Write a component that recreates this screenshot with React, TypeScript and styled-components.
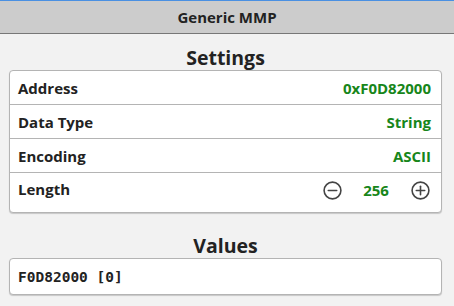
import React from "react";
import styled, { createGlobalStyle } from "styled-components";

const Global = createGlobalStyle`
  html, body { margin: 0; padding: 0; background: #f2f2f2; }
  body { font-family: "Open Sans", "Noto Sans", sans-serif; color: #222; }
  * { box-sizing: border-box; }
`;

const Page = styled.div`
  width: 454px;
  height: 306px;
  display: flex;
  flex-direction: column;
  background: #f2f2f2;
  border-top: 1px solid #4a90e2;
  overflow: hidden;
`;

const Header = styled.div`
  height: 33px;
  flex: none;
  display: flex;
  align-items: center;
  justify-content: center;
  background: #cccccc;
  border-bottom: 1px solid #777;
  font-weight: 700;
  font-size: 15px;
  color: #222;
`;

const Content = styled.div`
  flex: none;
  display: flex;
  flex-direction: column;
  padding: 0 12px 0 9px;
`;

const SectionTitle = styled.div<{ $top: number }>`
  margin-top: ${(p) => p.$top}px;
  height: 25px;
  display: flex;
  align-items: center;
  justify-content: center;
  font-weight: 700;
  font-size: 19.5px;
  color: #222;
`;

const Card = styled.div`
  background: #fff;
  border: 1px solid #b4b4b4;
  border-radius: 4px;
  box-shadow: 0 1px 1px rgba(0, 0, 0, 0.18);
  display: flex;
  flex-direction: column;
`;

const Row = styled.div<{ $h: number }>`
  height: ${(p) => p.$h}px;
  display: flex;
  align-items: center;
  justify-content: space-between;
  padding: 0 10px 0 8px;
  & + & { border-top: 1px solid #b4b4b4; }
`;

const RowTop = styled(Row)`
  align-items: flex-start;
  padding-top: 6px;
`;

const Label = styled.span`
  font-weight: 700;
  font-size: 15px;
  color: #222;
`;

const Value = styled.span`
  font-weight: 700;
  font-size: 15px;
  color: #17861a;
`;

const Stepper = styled.div`
  display: flex;
  align-items: center;
`;

const IconButton = styled.button`
  width: 22px;
  height: 22px;
  border: none;
  background: none;
  padding: 0;
  display: flex;
  align-items: center;
  justify-content: center;
  color: #444;
  cursor: pointer;
`;

const Count = styled(Value)`
  width: 66px;
  text-align: center;
`;

const ValueBox = styled.div`
  height: 37px;
  flex: none;
  background: #fff;
  border: 1px solid #b4b4b4;
  border-radius: 4px;
  box-shadow: 0 1px 1px rgba(0, 0, 0, 0.18);
  display: flex;
  align-items: center;
  padding: 0 8px;
  font-family: "DejaVu Sans Mono", monospace;
  font-weight: 700;
  font-size: 14.5px;
  color: #222;
`;

const CircleIcon = ({ plus }: { plus?: boolean }) => (
  <svg width="19" height="19" viewBox="0 0 19 19" fill="none" stroke="currentColor" strokeWidth="1.6" strokeLinecap="round">
    <circle cx="9.5" cy="9.5" r="8.4" />
    <line x1="5.3" y1="9.5" x2="13.7" y2="9.5" />
    {plus && <line x1="9.5" y1="5.3" x2="9.5" y2="13.7" />}
  </svg>
);

export default function App() {
  return (
    <>
      <Global />
      <Page>
        <Header>Generic MMP</Header>
        <Content>
          <SectionTitle $top={11}>Settings</SectionTitle>
          <Card>
            <Row $h={33}>
              <Label>Address</Label>
              <Value>0xF0D82000</Value>
            </Row>
            <Row $h={34}>
              <Label>Data Type</Label>
              <Value>String</Value>
            </Row>
            <Row $h={34}>
              <Label>Encoding</Label>
              <Value>ASCII</Value>
            </Row>
            <RowTop $h={40}>
              <Label>Length</Label>
              <Stepper>
                <IconButton aria-label="decrease"><CircleIcon /></IconButton>
                <Count>256</Count>
                <IconButton aria-label="increase"><CircleIcon plus /></IconButton>
              </Stepper>
            </RowTop>
          </Card>
          <SectionTitle $top={20}>Values</SectionTitle>
          <ValueBox>F0D82000 [0]</ValueBox>
        </Content>
      </Page>
    </>
  );
}
